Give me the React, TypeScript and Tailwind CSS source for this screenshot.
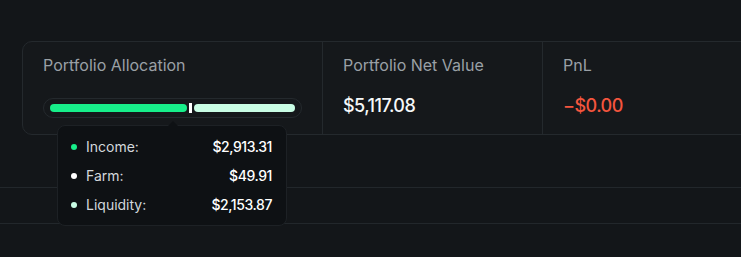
const allocation = [
  { label: 'Income', value: 2913.31, bar: 'bg-[#17ef8a]' },
  { label: 'Farm', value: 49.91, bar: 'bg-white' },
  { label: 'Liquidity', value: 2153.87, bar: 'bg-[#c9fde5]' },
]

const fmt = (n: number) =>
  '$' + n.toLocaleString('en-US', { minimumFractionDigits: 2, maximumFractionDigits: 2 })

function AllocationBar() {
  const total = allocation.reduce((s, a) => s + a.value, 0)
  return (
    <div className="flex h-[20px] w-[259px] items-center gap-[2px] rounded-full border border-[#24292d] px-[6px]">
      {allocation.map((a) => (
        <div
          key={a.label}
          className={`${a.bar} ${a.label === 'Farm' ? 'h-[10px] rounded-none' : 'h-[8px] rounded-full'}`}
          style={{ width: `${(a.value / total) * 100}%` }}
        />
      ))}
    </div>
  )
}

function Tooltip() {
  const dots = ['bg-[#17ef8a]', 'bg-white', 'bg-[#c9fde5]']
  return (
    <div className="absolute left-[57px] top-[125px] w-[230px] rounded-[8px] border border-[#1d2125] bg-[#0e1114] pl-[13px] pr-[14px] pt-[11px] pb-[10px]">
      <div className="absolute -top-[5px] left-[110px] h-0 w-0 border-x-[5px] border-b-[5px] border-x-transparent border-b-[#0e1114]" />
      <div className="flex flex-col gap-[9px]">
        {allocation.map((a, i) => (
          <div key={a.label} className="flex h-5 items-center justify-between text-[14px] leading-5">
            <div className="flex items-center gap-[9px]">
              <span className={`h-[6px] w-[6px] rounded-full ${dots[i]}`} />
              <span className="text-[#d3d8dc]">{a.label}:</span>
            </div>
            <span className="font-medium tracking-[-0.03em] text-white">{fmt(a.value)}</span>
          </div>
        ))}
      </div>
    </div>
  )
}

export default function App() {
  return (
    <div
      className="relative h-[257px] w-full overflow-hidden bg-[#131619] pt-[41px]"
      style={{ fontFamily: 'Inter, "Noto Sans", sans-serif' }}
    >
      <div className="ml-[22px] flex h-[94px] w-[760px] rounded-[10px] border border-[#24292d] bg-[#15181b]">
        <div className="w-[300px] border-r border-[#24292d] pl-[20px] pt-[11px]">
          <div className="text-[16px] leading-6 text-[#9aa0a6]">Portfolio Allocation</div>
          <div className="mt-[21px]">
            <AllocationBar />
          </div>
        </div>
        <div className="w-[220px] border-r border-[#24292d] pl-[20px] pt-[11px]">
          <div className="text-[16px] leading-6 text-[#9aa0a6]">Portfolio Net Value</div>
          <div className="mt-[17px] text-[18px] font-medium leading-6 tracking-[-0.03em] text-[#f6f8f9]">$5,117.08</div>
        </div>
        <div className="flex-1 pl-[20px] pt-[11px]">
          <div className="text-[16px] leading-6 text-[#9aa0a6]">PnL</div>
          <div className="mt-[17px] text-[18px] font-medium leading-6 tracking-[-0.03em] text-[#f4553e]">−$0.00</div>
        </div>
      </div>
      <div className="mt-[52px] h-[37px] border-y border-[#22272b]" />
      <Tooltip />
    </div>
  )
}
